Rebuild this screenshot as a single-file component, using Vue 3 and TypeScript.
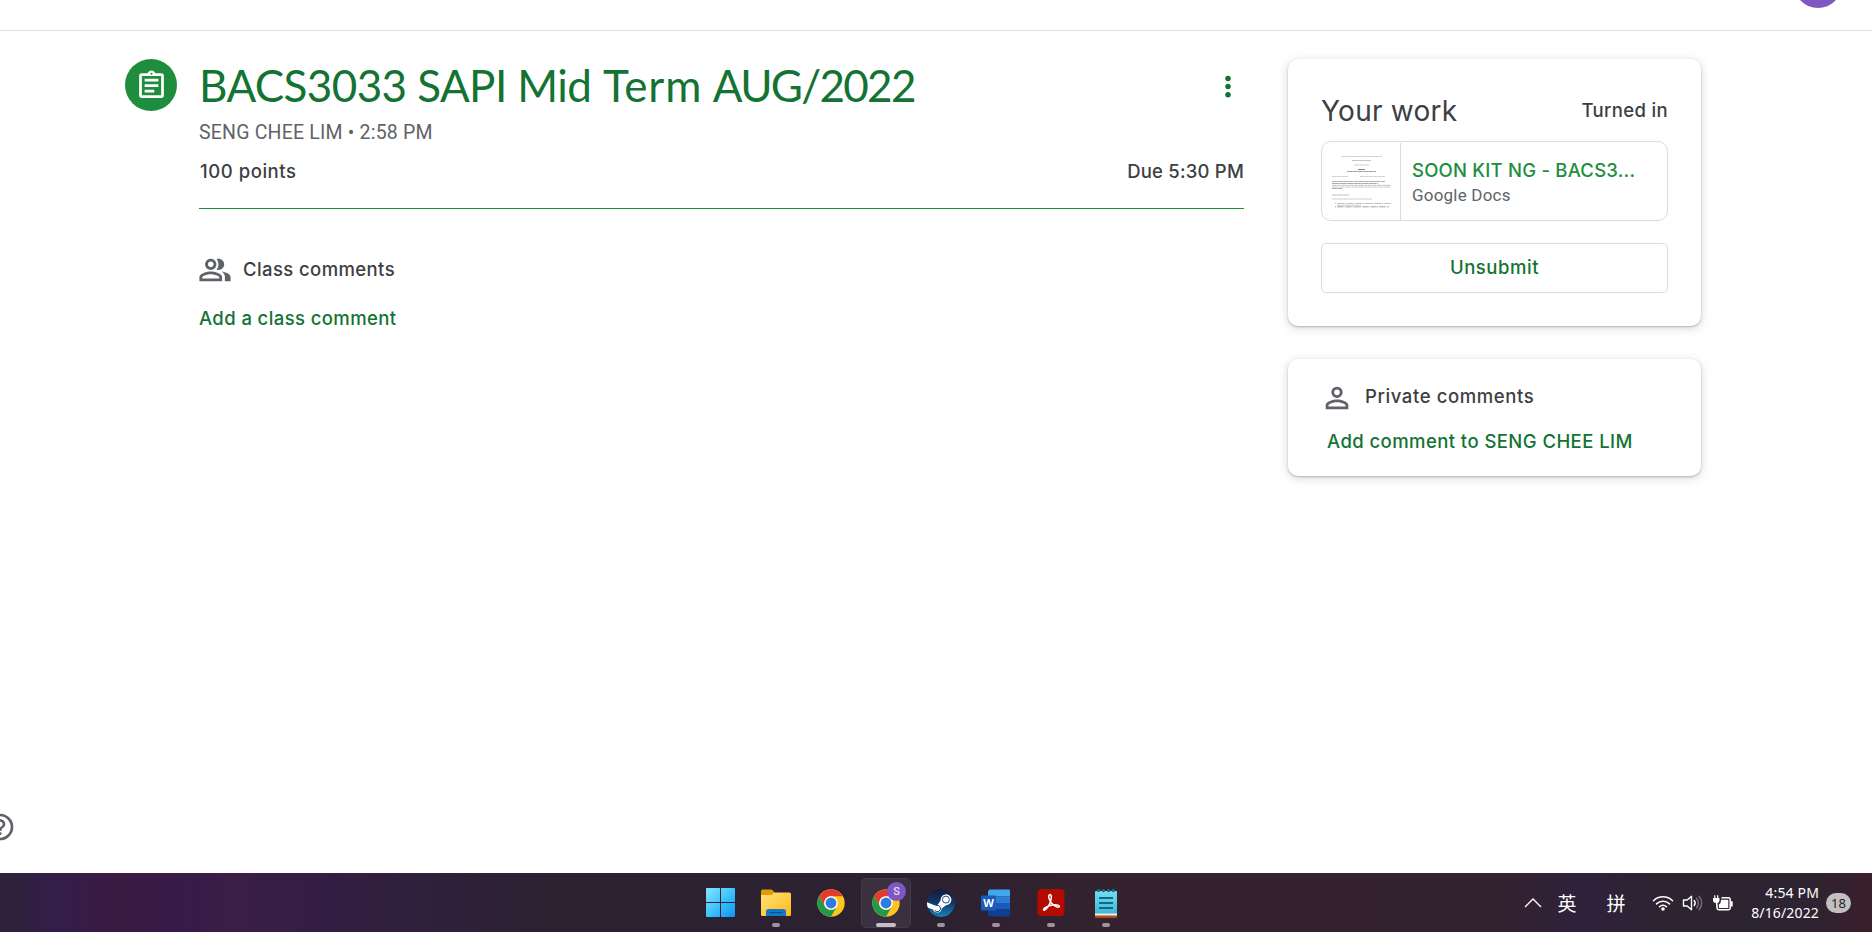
<script setup lang="ts">
interface ThumbLine { x: number; y: number; w: number; o: number; dash: string }

// Miniature text rows of the attached document
const thumbLines: ThumbLine[] = [
  { x: 19, y: 15, w: 41, o: 0.3, dash: '5 .4' },
  { x: 30, y: 19, w: 19, o: 0.4, dash: '6 .4' },
  { x: 32, y: 23.5, w: 15, o: 0.35, dash: '5 .4' },
  { x: 36, y: 28, w: 7, o: 0.8, dash: '7 0' },
  { x: 25, y: 30, w: 29, o: 0.6, dash: '5 0.3' },
  { x: 10, y: 35, w: 16, o: 0.3, dash: '4 .4' },
  { x: 38, y: 35, w: 25, o: 0.3, dash: '4 .4' },
  { x: 10, y: 40, w: 53, o: 0.5, dash: '5 .4' },
  { x: 10, y: 42, w: 46, o: 0.55, dash: '7 .4' },
  { x: 10, y: 43.8, w: 59, o: 0.4, dash: '4 .5' },
  { x: 10, y: 45.5, w: 59, o: 0.35, dash: '6 .5' },
  { x: 10, y: 47, w: 11, o: 0.55, dash: '5 0.5' },
  { x: 10, y: 53.5, w: 17, o: 0.45, dash: '5 0.3' },
  { x: 10, y: 57.5, w: 40, o: 0.35, dash: '5 .4' },
  { x: 13, y: 62, w: 56, o: 0.4, dash: '1 1 7 0.4' },
  { x: 15, y: 63.7, w: 24, o: 0.35, dash: '4 .4' },
  { x: 13, y: 65.3, w: 54, o: 0.6, dash: '1 1 6 0.4' },
]
const apps = ['windows', 'explorer', 'chrome', 'profile', 'steam', 'word', 'acrobat', 'notepad']
const running = (a: string) => !['windows', 'chrome'].includes(a)
</script>

<template>
  <div class="screen">
    <header class="topbar"><div class="avatar"></div></header>

    <main class="page">
      <div class="badge">
        <svg viewBox="0 0 24 24" width="33" height="33"><path fill="#fff" d="M7 15h7v2H7zm0-4h10v2H7zm0-4h10v2H7zm12-4h-4.18C14.4 1.84 13.3 1 12 1s-2.4.84-2.82 2H5a2 2 0 0 0-2 2v14a2 2 0 0 0 2 2h14a2 2 0 0 0 2-2V5a2 2 0 0 0-2-2zm-7-.25a.75.75 0 1 1 0 1.5.75.75 0 0 1 0-1.5zM19 19H5V5h14z" /></svg>
      </div>

      <section class="assignment">
        <div class="heading">
          <h1>BACS3033 SAPI Mid <span class="word">Term</span> <span class="term">AUG/2022</span></h1>
          <button class="more" aria-label="More options">
            <svg width="6" height="24" viewBox="0 0 6 24" fill="#137333"><circle cx="3" cy="3.4" r="2.75" /><circle cx="3" cy="11.6" r="2.75" /><circle cx="3" cy="19.8" r="2.75" /></svg>
          </button>
        </div>
        <p class="author">SENG CHEE LIM • 2:58 PM</p>
        <div class="facts"><span class="points">100 points</span><span class="due">Due 5:30 PM</span></div>
        <div class="comments-head">
          <svg viewBox="0 0 24 24" width="34" height="34" fill="#5f6368"><path d="M9 12c2.21 0 4-1.79 4-4s-1.79-4-4-4-4 1.79-4 4 1.79 4 4 4zm0-6c1.1 0 2 .9 2 2s-.9 2-2 2-2-.9-2-2 .9-2 2-2zm0 7c-2.67 0-8 1.34-8 4v3h16v-3c0-2.66-5.33-4-8-4zm6 5H3v-.99C3.2 16.29 6.3 15 9 15s5.8 1.29 6 2zM14.500 12c2.210 0 4-1.790 4-4s-1.790-4-4-4c-.47 0-.91.1-1.330.24a5.980 5.980 0 0 1 0 7.520c.42.14.86.24 1.330.24zM16.670 13.130C18.040 14.060 19 15.320 19 17v3h4v-3c0-2.180-3.570-3.470-6.330-3.870z" /></svg>
          <span>Class comments</span>
        </div>
        <a class="link add-class">Add a class comment</a>
      </section>

      <aside class="side">
        <section class="card work">
          <div class="work-head"><h2>Your work</h2><span class="status">Turned in</span></div>
          <div class="attachment">
            <svg class="thumb" width="78" height="78" viewBox="0 0 78 78">
              <line v-for="(l, i) in thumbLines" :key="i" :x1="l.x" :x2="l.x + l.w" :y1="l.y - 0.5" :y2="l.y - 0.5" stroke="#555" stroke-width="0.9" :stroke-opacity="l.o" :stroke-dasharray="l.dash" />
            </svg>
            <div class="divider"></div>
            <div class="file"><div class="file-name">SOON KIT NG - BACS3...</div><div class="file-type">Google Docs</div></div>
          </div>
          <button class="unsubmit">Unsubmit</button>
        </section>

        <section class="card private">
          <div class="private-head">
            <svg viewBox="0 0 24 24" width="34" height="34" fill="#5f6368"><path d="M12 6a2 2 0 1 1 0 4 2 2 0 0 1 0-4m0 9c2.700 0 5.800 1.290 6 2v1H6v-.99c.2-.72 3.300-2.010 6-2.010m0-11a4 4 0 1 0 0 8 4 4 0 0 0 0-8zm0 9c-2.670 0-8 1.340-8 4v3h16v-3c0-2.660-5.330-4-8-4z" /></svg>
            <span>Private comments</span>
          </div>
          <a class="link add-private">Add comment to SENG CHEE LIM</a>
        </section>
      </aside>
    </main>

    <svg class="help" width="32" height="32" viewBox="0 0 24 24" fill="#5f6368"><path d="M11 18h2v-2h-2zm1-16a10 10 0 1 0 0 20 10 10 0 0 0 0-20zm0 18a8 8 0 1 1 0-16 8 8 0 0 1 0 16zm0-14a4 4 0 0 0-4 4h2a2 2 0 1 1 4 0c0 2-3 1.750-3 5h2c0-2.250 3-2.500 3-5a4 4 0 0 0-4-4z" /></svg>

    <footer class="taskbar">
      <nav class="apps">
        <div v-for="a in apps" :key="a" class="app" :class="{ active: a === 'profile' }">
          <svg v-if="a === 'windows'" width="30" height="30" viewBox="0 0 30 30">
            <defs><linearGradient id="win" gradientUnits="userSpaceOnUse" x1="0" y1="0" x2="30" y2="30"><stop offset="0" stop-color="#8be3ff" /><stop offset=".5" stop-color="#3cc3fa" /><stop offset="1" stop-color="#0a8ff5" /></linearGradient></defs>
            <path fill="url(#win)" d="M1 0H14v14H0V1a1 1 0 0 1 1-1zM15 0h13a1 1 0 0 1 1 1v13H15zM0 15H14v14H1a1 1 0 0 1-1-1zM15 15h14v13a1 1 0 0 1-1 1H15z" />
          </svg>

          <svg v-else-if="a === 'explorer'" width="30" height="28" viewBox="0 0 30 28">
            <defs><linearGradient id="fold" x1="0" y1="0" x2="1" y2="1"><stop offset="0" stop-color="#ffe07a" /><stop offset="1" stop-color="#fdbb16" /></linearGradient></defs>
            <path fill="#df9c05" d="M0 7V2Q0 .500 1.500.500H10q1 0 1.700.800L14 4h8v5H0z" />
            <path fill="url(#fold)" d="M0 6h10.500l3-2.500h15Q30 3.500 30 5v20.500q0 1.500-1.500 1.500h-27Q0 27 0 25.500z" />
            <path fill="#1279c9" d="M5 27v-4.500q0-2.500 2.500-2.500h15q2.500 0 2.500 2.500V27z" />
            <path stroke="#07518c" stroke-width="1" d="M8.500 23.500h13" />
          </svg>

          <svg v-else-if="a === 'chrome' || a === 'profile'" width="28" height="28" viewBox="0 0 48 48">
            <circle cx="24" cy="24" r="23.500" fill="#fdc51d" />
            <path fill="#e33b2e" d="M3.650 12.250A23.500 23.500 0 0 1 44.350 12.250H24A11.750 11.750 0 0 0 13.820 29.880z" />
            <path fill="#229a4d" d="M3.650 12.250A23.500 23.500 0 0 0 24 47.500L34.180 29.880A11.750 11.750 0 0 1 13.820 29.880z" />
            <circle cx="24" cy="24" r="11.750" fill="#fff" /><circle cx="24" cy="24" r="9.300" fill="#2e7be8" />
          </svg>

          <svg v-else-if="a === 'steam'" width="28" height="28" viewBox="0 0 28 28">
            <defs><linearGradient id="steam" x1="0" y1="0" x2="0" y2="1"><stop offset="0" stop-color="#151a3a" /><stop offset=".5" stop-color="#10396b" /><stop offset="1" stop-color="#1388bd" /></linearGradient><clipPath id="disc"><circle cx="14" cy="14" r="14" /></clipPath></defs>
            <g clip-path="url(#disc)">
              <circle cx="14" cy="14" r="14" fill="url(#steam)" />
              <path fill="#fff" d="M0 13.200l8 3.200q1.300-.700 2.800-.700l3.200-5a5.200 5.200 0 1 1 5.400 5.200l-4.700 3.500a4.500 4.500 0 0 1-8.700 1.200L0 18.300z" />
              <circle cx="18.900" cy="10.600" r="5.200" fill="#fff" />
              <circle cx="18.900" cy="10.600" r="3.500" fill="#fff" stroke="#173b66" stroke-width=".900" />
              <path fill="none" stroke="#173b66" stroke-width="1" d="M7.700 21.300a3.200 3.200 0 1 0 1-4.600" />
            </g>
          </svg>

          <svg v-else-if="a === 'word'" width="30" height="28" viewBox="0 0 30 28">
            <path fill="#42a5f0" d="M8.500.500h19.500a1 1 0 0 1 1 1V7.500h-22V2z" /><path fill="#2b7cd3" d="M7 7.500h22v6.500H7z" /><path fill="#185abd" d="M7 14h22v6.500H7z" /><path fill="#103f91" d="M7 20.500h22V26.500a1 1 0 0 1-1 1H8.500L7 26z" />
            <rect x="0" y="6.500" width="15" height="15" rx="1.300" fill="#185abd" />
            <text x="7.500" y="18" text-anchor="middle" letter-spacing="0" font-family="Open Sans, sans-serif" font-size="11" font-weight="700" fill="#fff">W</text>
          </svg>

          <svg v-else-if="a === 'acrobat'" width="28" height="28" viewBox="0 0 28 28">
            <rect x=".500" y="0" width="27" height="27" rx="4" fill="#b30b00" />
            <path fill="none" stroke="#fff" stroke-width="1.500" stroke-linejoin="round" d="M12.700 5.700c2.200-.700 2.200 4.500-.200 9.400C10.600 19.200 7.500 22.300 6.600 20.900c-.8-1.500 4.300-4 9-4.800 4.500-.7 7.200.2 6.600 1.600-.8 1.500-5.200-.8-7.500-3.400-2.700-3.100-4-8.100-2-8.600z" />
          </svg>

          <svg v-else width="24" height="32" viewBox="0 0 24 32">
            <defs><linearGradient id="note" x1="0" y1="0" x2="0" y2="1"><stop offset="0" stop-color="#73dcf2" /><stop offset="1" stop-color="#42b7d8" /></linearGradient></defs>
            <path fill="#a75416" d="M1 27h22v3a1 1 0 0 1-1 1H2a1 1 0 0 1-1-1z" /><path fill="#eee" d="M1 25h22v3.500H1z" /><path fill="url(#note)" d="M2 4h20a1 1 0 0 1 1 1v21.500H1V5a1 1 0 0 1 1-1z" />
            <path stroke="#126987" stroke-width="2" d="M5 11h14M5 16h14M5 21h14" />
            <g fill="#176d89"><circle cx="4.500" cy="3.600" r="1.700" /><circle cx="9.500" cy="3.600" r="1.700" /><circle cx="14.500" cy="3.600" r="1.700" /><circle cx="19.500" cy="3.600" r="1.700" /></g>
          </svg>

          <span v-if="a === 'profile'" class="profile-badge">S</span>
          <i v-if="running(a)" class="dot"></i>
        </div>
      </nav>

      <div class="tray">
        <svg class="chevron" width="18" height="12" viewBox="0 0 18 12"><path fill="none" stroke="#fff" stroke-width="1.300" d="M1 10l8-8 8 8" /></svg>
        <span class="ime">英</span>
        <span class="ime second">拼</span>
        <svg class="wifi" width="22" height="18" viewBox="0 0 22 18"><g fill="none" stroke="#fff" stroke-width="1.500" stroke-linecap="round"><path d="M1.500 6.800a13.300 13.300 0 0 1 19 0M4.500 9.900a9.200 9.200 0 0 1 13 0M7.500 12.800a5 5 0 0 1 7 0" /></g><circle cx="11" cy="15" r="1.800" fill="#fff" /></svg>
        <svg class="sound" width="22" height="18" viewBox="0 0 22 18"><g fill="none" stroke="#fff" stroke-width="1.400" stroke-linejoin="round" stroke-linecap="round"><path d="M1.500 6h3.700L9.500 2.200v13.600L5.200 12H1.500zM12.200 6.500a4 4 0 0 1 0 5" /><path stroke-opacity=".35" d="M14.500 4.200a7 7 0 0 1 0 9.600M17 2.200a10 10 0 0 1 0 13.600" /></g></svg>
        <svg class="battery" width="22" height="18" viewBox="0 0 22 18"><path fill="none" stroke="#fff" stroke-width="1.500" d="M9.500 3.700H16.500q1.700 0 1.700 1.700v8.700q0 1.700-1.700 1.700H6.700Q5 15.800 5 14.100V11" /><path fill="#fff" d="M9 5.700h7.300v8.200H6.900V10.500Q9 9.500 9 6.500zM19 7.200h1.700v5.200H19zM1 4h1.200V1.200h1.200V4h1.700V1.200h1.200V4h1.200v2.500q0 2-2 2.500v2.800H4V9Q1 8.500 1 6.500z" /></svg>
        <div class="clock"><span>4:54 PM</span><span>8/16/2022</span></div>
        <span class="count">18</span>
      </div>
    </footer>
  </div>
</template>

<style>
html, body { margin: 0; background: #fff; overflow: hidden; }
</style>

<style scoped>
.screen { position: relative; display: flex; flex-direction: column; width: 1872px; height: 932px; overflow: hidden; background: #fff; color: #3c4043; font: 500 18.5px/22px Inter, sans-serif; letter-spacing: .4px; }
h1, h2, p { margin: 0; font-weight: 400; }
button { padding: 0; background: none; border: 0; font: inherit; letter-spacing: inherit; }
.topbar { height: 30px; flex: none; border-bottom: 1px solid #e0e0e0; }
.avatar { width: 48px; height: 48px; margin: -40px 0 0 1794px; border-radius: 50%; background: #7e57c2; }
.page { flex: 1; display: flex; align-items: flex-start; padding: 28px 0 0 125px; min-height: 0; }
.badge { display: flex; align-items: center; justify-content: center; width: 52px; height: 52px; border-radius: 50%; background: #1e8e3e; }
.assignment { width: 1045px; margin-left: 22px; }
.heading { display: flex; justify-content: space-between; height: 52px; }
h1 { font: 400 44px/52px Lato, sans-serif; letter-spacing: -.6px; color: #137333; white-space: nowrap; }
.word { margin-left: 1px; letter-spacing: .8px; }
.term { letter-spacing: -1.7px; }
.more { width: 6px; height: 24px; margin: 16px 13px 0 0; }
.more svg { display: block; }
.author { margin-top: 10px; font: 400 19.5px/24px Roboto, sans-serif; letter-spacing: .2px; color: #5f6368; }
.facts { display: flex; justify-content: space-between; margin-top: 15px; padding-bottom: 26px; border-bottom: 1px solid #1e8e3e; }
.points { margin-left: 1px; letter-spacing: .55px; }
.due { letter-spacing: .2px; }
.comments-head { display: flex; align-items: center; height: 34px; margin: 44px 0 0 -1px; gap: 11px; }
.comments-head span { padding-bottom: 2px; }
.link { display: block; color: #137333; white-space: nowrap; }
.add-class { margin: 20px 0 0; }
.side { display: flex; flex-direction: column; gap: 33px; width: 413px; margin-left: 44px; }
.card { box-sizing: border-box; border-radius: 10px; background: #fff; box-shadow: 0 1px 2px rgba(60, 64, 67, .3), 0 2px 8px 1px rgba(60, 64, 67, .17); }
.work { height: 267px; padding: 35px 33px 0; }
.work-head { display: flex; align-items: center; justify-content: space-between; height: 34px; letter-spacing: .35px; }
.status { padding-bottom: 2px; }
h2 { font-size: 28px; line-height: 34px; letter-spacing: .25px; }
.attachment { display: flex; box-sizing: border-box; height: 80px; margin-top: 13px; border: 1px solid #dadce0; border-radius: 10px; }
.thumb { flex: none; }
.divider { width: 1px; margin-top: 1px; background: #dadce0; }
.file { padding: 17px 0 0 11px; }
.file-name { color: #1e8e3e; letter-spacing: .22px; white-space: nowrap; }
.file-type { margin-top: 3px; font: 400 17px/22px Roboto, sans-serif; letter-spacing: .2px; color: #5f6368; }
.unsubmit { display: block; box-sizing: border-box; width: 100%; height: 50px; margin-top: 22px; padding-bottom: 2px; border: 1px solid #dadce0; border-radius: 5px; color: #137333; letter-spacing: .55px; }
.private { height: 117px; padding: 22px 32px 0; }
.private-head { display: flex; align-items: center; gap: 11px; letter-spacing: .6px; }
.private-head span { padding-bottom: 4px; }
.add-private { margin: 15px 0 0 7px; letter-spacing: .43px; }
.help { position: absolute; left: -16px; top: 811px; }

.taskbar { position: relative; display: flex; flex: none; height: 59px; justify-content: space-between; color: #fff; background: linear-gradient(90deg, #2e2238 0, #331e4a 55px, #3b1a42 120px, #371b49 180px, #3a1e45 230px, #331e43 330px, #2f203a 440px, #2b2130 560px, #2c2131 920px, #35222f 1120px, #33222f 1500px, #30213c 1580px, #2c2430 1670px, #2d2331 1800px, #3b1f2c 1872px); }
.apps { display: flex; align-items: center; gap: 5px; margin-left: 696px; padding-top: 1px; }
.app { position: relative; box-sizing: border-box; display: flex; align-items: center; justify-content: center; width: 50px; height: 50px; }
.app svg { display: block; }
.app.active { border: 1px solid #45394a; border-radius: 5px; background: #3a303f; }
.dot { position: absolute; left: 21px; bottom: 1px; width: 8px; height: 4px; border-radius: 2px; background: #9e939f; }
.active .dot { left: 14px; bottom: 0; width: 20px; background: #c8bec5; }
.profile-badge { position: absolute; left: 25px; top: 3px; width: 19px; height: 19px; border-radius: 50%; background: #7e57c2; color: #e5dcf2; font: 500 11px/19px Roboto, sans-serif; letter-spacing: 0; text-align: center; }
.tray { display: flex; align-items: center; padding-right: 21px; letter-spacing: 0; font: 400 14px/20px "Noto Sans", sans-serif; }
.chevron { margin-right: 15px; }
.ime { width: 20px; font: 400 19px/24px "Noto Sans CJK SC", sans-serif; text-align: center; }
.second { margin-left: 29px; }
.wifi { margin-left: 26px; }
.sound { margin-left: 8px; }
.battery { margin-left: 8px; }
.clock { display: flex; flex-direction: column; align-items: flex-end; width: 72px; margin-left: 13px; letter-spacing: .15px; }
.count { width: 25px; height: 20px; margin-left: 7px; border-radius: 10px; background: #c2bfc2; color: #222; font-size: 13px; text-align: center; }
</style>
